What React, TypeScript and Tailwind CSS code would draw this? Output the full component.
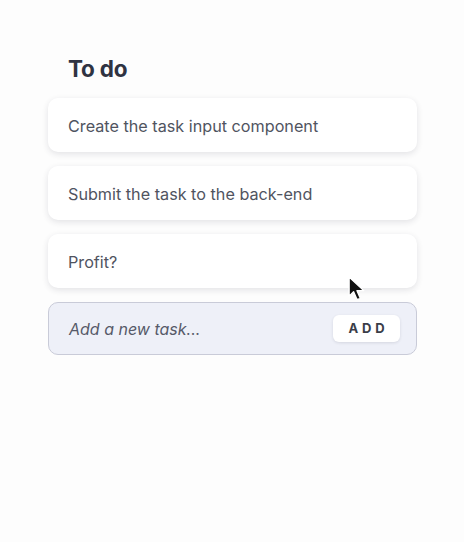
import React from "react";

const tasks = ["Create the task input component", "Submit the task to the back-end", "Profit?"];

function Cursor() {
  return (
    <svg className="absolute left-[348px] top-[276px]" width="18" height="27" viewBox="0 0 16 24">
      <path d="M1 1 L1 18 L5 14 L8 21 L11 20 L8 13 L14 13 Z" fill="#111" stroke="#fff" strokeWidth="1.2" strokeLinejoin="round" />
    </svg>
  );
}

export default function App() {
  return (
    <div className="relative h-[542px] w-[464px] bg-[#fdfdfd] font-['Inter',sans-serif]">
      <div className="flex flex-col pl-12 pr-[47px] pt-[52px]">
        <h1 className="mb-[12px] pl-5 text-[22.5px] font-bold tracking-[-0.01em] text-[#2f3342]">To do</h1>
        <div className="flex flex-col gap-[14px]">
          {tasks.map((t) => (
            <div
              key={t}
              className="flex h-[54px] items-center rounded-[10px] bg-white px-5 pt-[3px] text-[16.2px] text-[#50545f] shadow-[0_2px_6px_rgba(30,35,60,0.12)]"
            >
              {t}
            </div>
          ))}
          <div className="flex h-[53px] items-center justify-between rounded-[10px] border border-[#c9cbd8] bg-[#eef0f8] pl-5 pr-4">
            <span className="pt-[2px] text-[16px] italic text-[#565a69]">Add a new task...</span>
            <button className="flex h-[27px] w-[67px] items-center justify-center rounded-[6px] bg-white pl-[4px] text-[13px] font-bold tracking-[0.3em] text-[#3a3d48] shadow-[0_1px_3px_rgba(30,35,60,0.12)]">
              ADD
            </button>
          </div>
        </div>
      </div>
      <Cursor />
    </div>
  );
}
